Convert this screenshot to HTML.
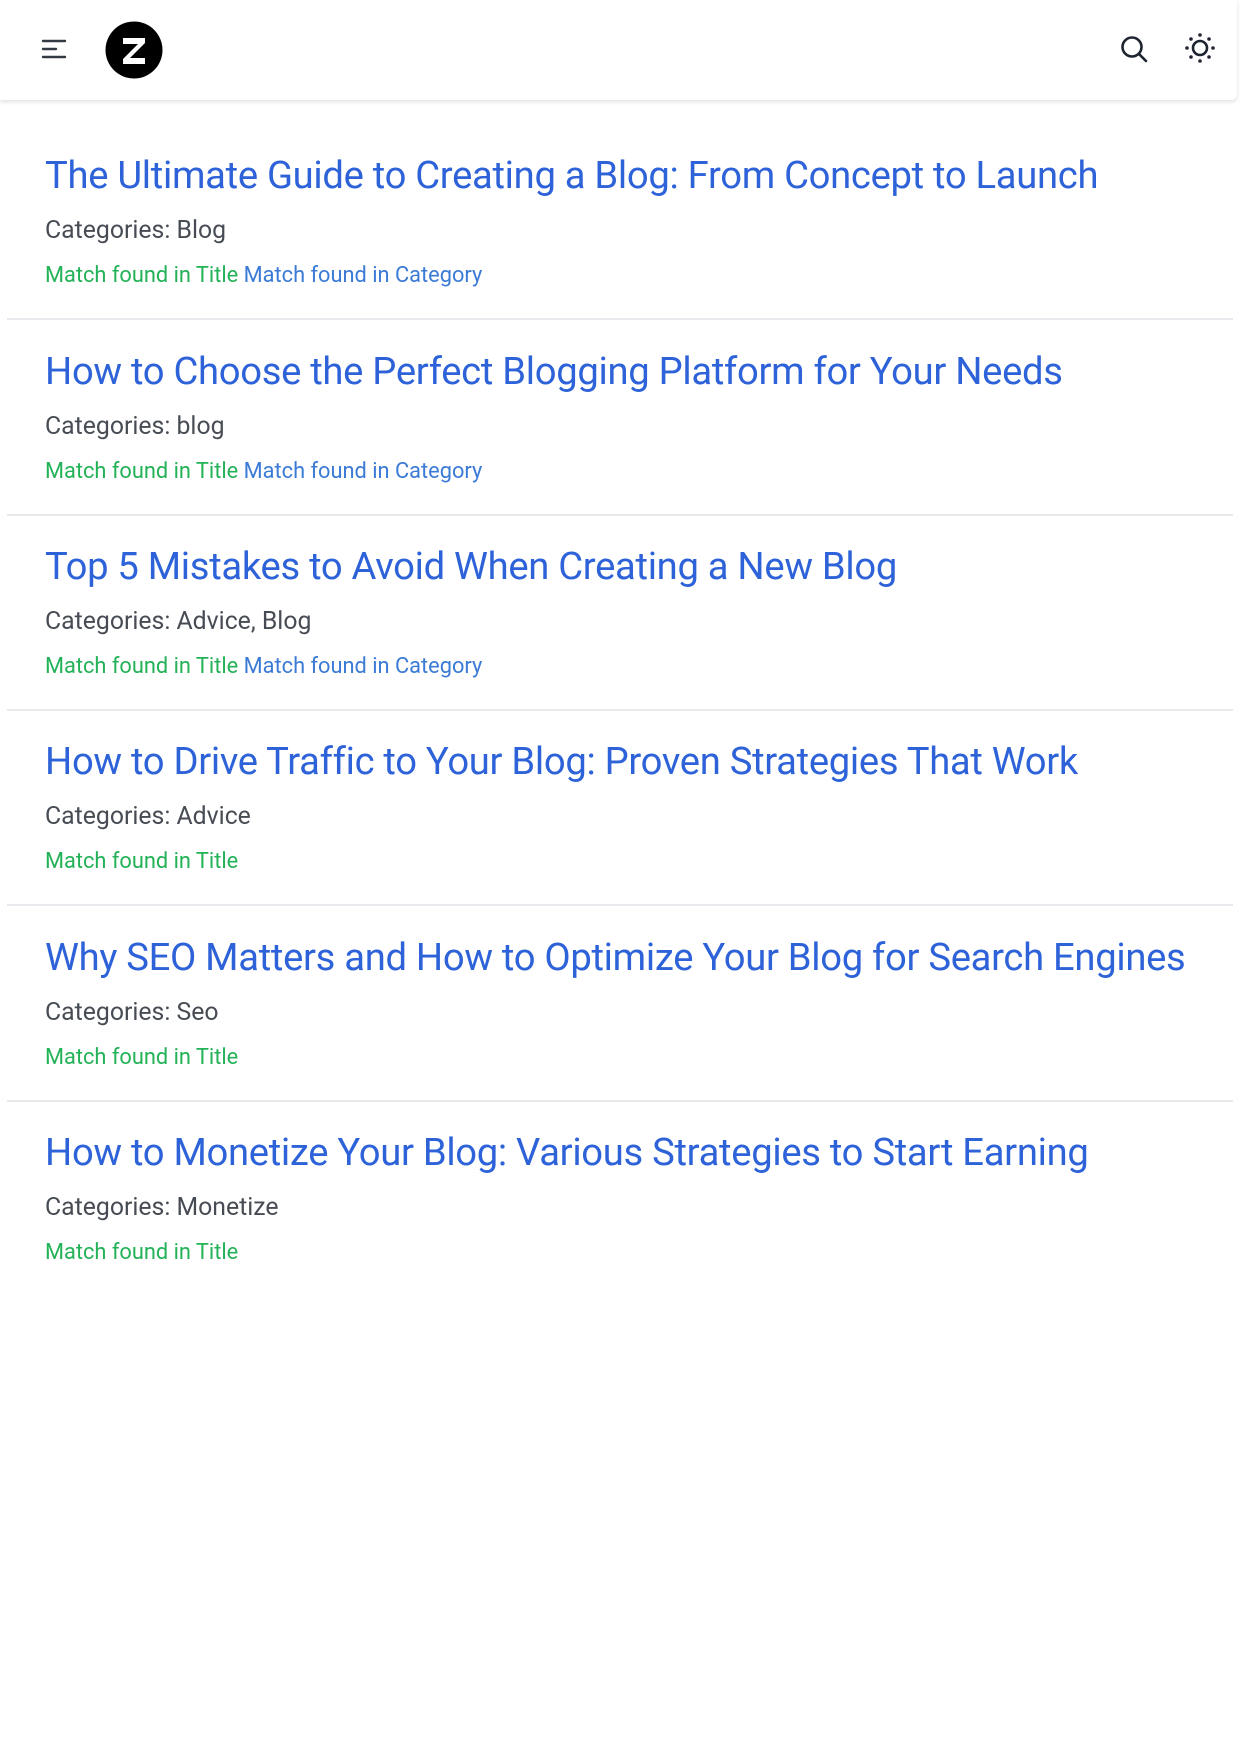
<!DOCTYPE html>
<html><head><meta charset="utf-8"><style>
body{margin:0;background:#fff;font-family:Roboto,"Liberation Sans",sans-serif;width:1240px;height:1754px;overflow:hidden}
.hdr{position:absolute;left:0;top:0;width:1237px;height:100px;background:#fff;box-shadow:0 2px 4px rgba(0,0,0,.12);border-radius:0 0 6px 0}
.row{position:absolute;left:7px;width:1226px;height:195px;border-bottom:2px solid #e8e9ec}
.t{position:absolute;left:38px;top:34px;font-size:38.2px;color:#2d62d8;white-space:nowrap;line-height:1;letter-spacing:-0.3px}
.c{position:absolute;left:38px;top:93px;font-size:24.8px;color:#474c54;white-space:nowrap}
.m{position:absolute;left:38px;top:140px;font-size:21.8px;white-space:nowrap}
.g{color:#23b257}.b{color:#3b7bd6}
</style></head><body>
<div class="hdr">
<svg style="position:absolute;left:40px;top:36px" width="30" height="26"><path d="M3 5h22M3 13h13M3 21h22" stroke="#333a44" stroke-width="2.4" stroke-linecap="round"/></svg>
<svg style="position:absolute;left:104px;top:21px" width="60" height="60"><circle cx="30" cy="29" r="28.5" fill="#000"/><path d="M19 17h22v5L26 37h15v6H19v-5l15-15H19z" fill="#fff"/></svg>
<svg style="position:absolute;left:1118px;top:32px" width="34" height="34"><circle cx="14" cy="15" r="9.5" fill="none" stroke="#1f2530" stroke-width="2.6"/><path d="M21 22l7 7" stroke="#1f2530" stroke-width="2.6" stroke-linecap="round"/></svg>
<svg style="position:absolute;left:1183px;top:32px" width="34" height="34"><circle cx="17" cy="16" r="7" fill="none" stroke="#1f2530" stroke-width="2.6"/><g fill="#1f2530"><circle cx="17" cy="3" r="1.8"/><circle cx="17" cy="29" r="1.8"/><circle cx="4" cy="16" r="1.8"/><circle cx="30" cy="16" r="1.8"/><circle cx="8" cy="7" r="1.8"/><circle cx="26" cy="7" r="1.8"/><circle cx="8" cy="25" r="1.8"/><circle cx="26" cy="25" r="1.8"/></g></svg>
</div>
<div class="row" style="top:123px"><div class="t">The Ultimate Guide to Creating a Blog: From Concept to Launch</div><div class="c">Categories: Blog</div><div class="m"><span class="g">Match found in Title</span> <span class="b">Match found in Category</span></div></div>
<div class="row" style="top:319px"><div class="t">How to Choose the Perfect Blogging Platform for Your Needs</div><div class="c">Categories: blog</div><div class="m"><span class="g">Match found in Title</span> <span class="b">Match found in Category</span></div></div>
<div class="row" style="top:514px"><div class="t">Top 5 Mistakes to Avoid When Creating a New Blog</div><div class="c">Categories: Advice, Blog</div><div class="m"><span class="g">Match found in Title</span> <span class="b">Match found in Category</span></div></div>
<div class="row" style="top:709px"><div class="t">How to Drive Traffic to Your Blog: Proven Strategies That Work</div><div class="c">Categories: Advice</div><div class="m"><span class="g">Match found in Title</span></div></div>
<div class="row" style="top:905px"><div class="t">Why SEO Matters and How to Optimize Your Blog for Search Engines</div><div class="c">Categories: Seo</div><div class="m"><span class="g">Match found in Title</span></div></div>
<div class="row" style="top:1100px;border-bottom:none"><div class="t">How to Monetize Your Blog: Various Strategies to Start Earning</div><div class="c">Categories: Monetize</div><div class="m"><span class="g">Match found in Title</span></div></div>
</body></html>
